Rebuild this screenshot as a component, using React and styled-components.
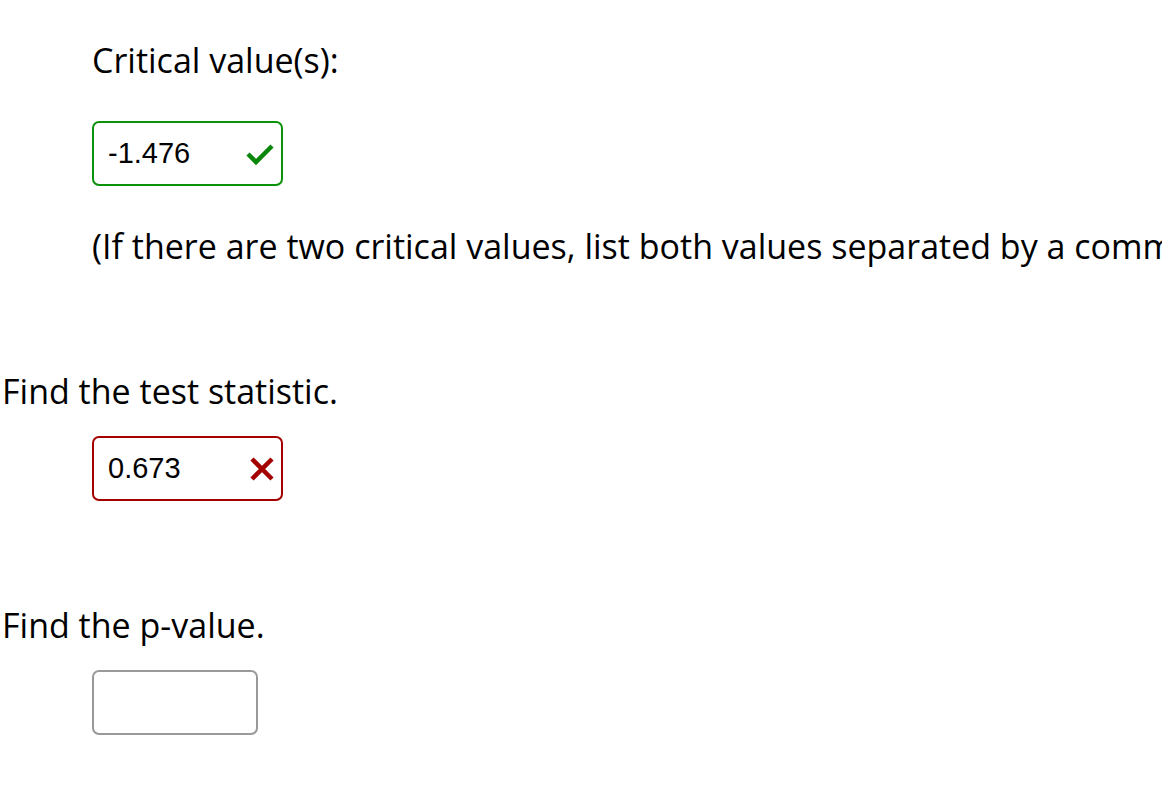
import React from "react";
import styled, { createGlobalStyle } from "styled-components";

const Global = createGlobalStyle`
  html, body { margin: 0; padding: 0; background: #fff; overflow: hidden; }
  body { font-family: "Open Sans", "Noto Sans", sans-serif; color: #000; }
`;

const Page = styled.div`
  width: 1162px;
  height: 785px;
  overflow: hidden;
  padding: 0 0 0 2px;
  box-sizing: border-box;
  display: flex;
  flex-direction: column;
`;

const Section = styled.div`
  display: flex;
  flex-direction: column;
  align-items: flex-start;
  padding-left: ${(p) => p.$indent || 0}px;
  margin-top: ${(p) => p.$top || 0}px;
`;

const Text = styled.div`
  font-size: 34px;
  line-height: 44px;
  white-space: nowrap;
  margin-top: ${(p) => p.$top || 0}px;
`;

const colors = {
  correct: "#0a930a",
  wrong: "#a50000",
  empty: "#999999",
};

const Box = styled.div`
  box-sizing: border-box;
  width: ${(p) => p.$w}px;
  height: 65px;
  border: 2px solid ${(p) => colors[p.$state]};
  border-radius: 7px;
  display: flex;
  align-items: center;
  justify-content: space-between;
  padding: 0 6px 0 14px;
  margin-top: ${(p) => p.$top || 0}px;
  background: #fff;
`;

const Value = styled.span`
  font-family: "Liberation Sans", Arial, sans-serif;
  font-size: 29px;
  color: #000;
`;

const Check = () => (
  <svg width="30" height="24" viewBox="0 0 30 24">
    <path d="M3 12 L11 20 L27 4" fill="none" stroke="#0a870a" strokeWidth="4.5" />
  </svg>
);

const Cross = () => (
  <svg width="26" height="26" viewBox="0 0 26 26">
    <path d="M3 3 L23 23 M23 3 L3 23" fill="none" stroke="#a50000" strokeWidth="4.5" />
  </svg>
);

export default function App() {
  return (
    <>
      <Global />
      <Page>
        <Section $indent={90} $top={38}>
          <Text>Critical value(s):</Text>
          <Box $state="correct" $w={191} $top={39}>
            <Value>-1.476</Value>
            <Check />
          </Box>
          <Text $top={38}>(If there are two critical values, list both values separated by a comma.)</Text>
        </Section>
        <Section $top={101}>
          <Text>Find the test statistic.</Text>
          <Section $indent={90}>
            <Box $state="wrong" $w={191} $top={23}>
              <Value>0.673</Value>
              <Cross />
            </Box>
          </Section>
        </Section>
        <Section $top={102}>
          <Text>Find the p-value.</Text>
          <Section $indent={90}>
            <Box $state="empty" $w={166} $top={23} />
          </Section>
        </Section>
      </Page>
    </>
  );
}
